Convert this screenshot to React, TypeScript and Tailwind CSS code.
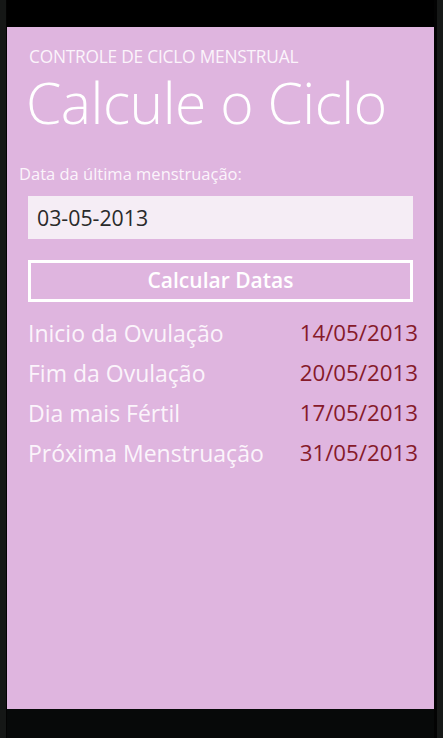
import React from "react";

const rows = [
  ["Inicio da Ovulação", "14/05/2013"],
  ["Fim da Ovulação", "20/05/2013"],
  ["Dia mais Fértil", "17/05/2013"],
  ["Próxima Menstruação", "31/05/2013"],
];

export default function App() {
  return (
    <div
      className="w-[443px] h-[738px] bg-[#050505] flex"
      style={{ fontFamily: '"Open Sans", "Noto Sans", sans-serif' }}
    >
      <div className="w-[6px] h-full bg-[#151716]" />
      <div className="w-[1px] h-full bg-[#030303]" />
      <div className="flex flex-col w-[427px]">
        <div className="h-[27px] bg-black" />
        <div className="h-[682px] bg-[#dfb5df] flex flex-col">
          <div className="pl-[22px] pt-[19px] text-[17.3px] leading-[22px] text-[#fbf4fb] tracking-[-0.2px]">
            CONTROLE DE CICLO MENSTRUAL
          </div>
          <div className="pl-[19px] mt-[6px] text-[57px] leading-[56px] font-light text-white tracking-[-0.5px]">
            Calcule o Ciclo
          </div>
          <div className="pl-[12px] mt-[34px] text-[16.5px] leading-[20px] text-[#fbf4fb]">
            Data da última menstruação:
          </div>
          <div className="ml-[21px] mt-[12px] w-[385px] h-[43px] bg-[#f5edf5] flex items-center pl-[9px] text-[21.3px] text-[#2a2a2a]">
            03-05-2013
          </div>
          <div className="ml-[21px] mt-[21px] w-[385px] h-[42px] border-[3px] border-white flex items-center justify-center text-[21px] font-semibold text-white">
            Calcular Datas
          </div>
          <div className="mt-[11px] pl-[21px] pr-[16px] flex flex-col">
            {rows.map(([l, d]) => (
              <div key={l} className="flex justify-between items-center h-[40px] text-[23px] leading-[30px]">
                <span className="text-[#fbf4fb]">{l}</span>
                <span className="text-[#861a2a] text-[22.3px]">{d}</span>
              </div>
            ))}
          </div>
        </div>
        <div className="flex-1 bg-[#070909]" />
      </div>
      <div className="w-[3px] h-full bg-[#030303]" />
      <div className="flex-1 h-full bg-[#161817]" />
    </div>
  );
}
